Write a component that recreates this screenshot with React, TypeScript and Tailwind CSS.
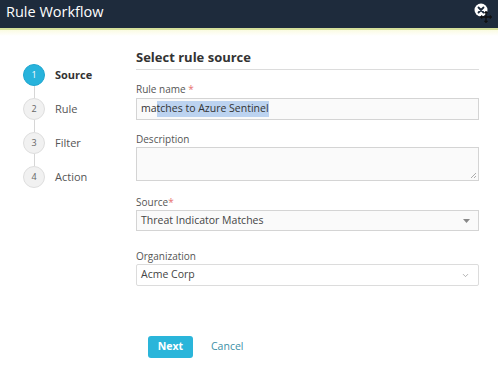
import { ChevronDown } from 'lucide-react'

const steps = ['Source', 'Rule', 'Filter', 'Action']

function CloseIcon() {
  return (
    <svg width="20" height="22" viewBox="0 0 20 22" className="absolute right-[5px] top-[2px]">
      <circle cx="8" cy="8" r="6.5" fill="#ffffff" />
      <path d="M5.5 5.5 L10.5 10.5 M10.5 5.5 L5.5 10.5" stroke="#1e2b3c" strokeWidth="1.8" strokeLinecap="round" />
      <g stroke="#111" strokeWidth="1.3" fill="#111">
        <path d="M13 10 V20 M8 15 H18" />
        <path d="M13 9 L11.3 11 H14.7 Z M13 21 L11.3 19 H14.7 Z M7 15 L9 13.3 V16.7 Z M19 15 L17 13.3 V16.7 Z" strokeWidth="0.6" />
      </g>
    </svg>
  )
}

function StepList() {
  return (
    <div className="w-[136px] shrink-0 pl-[23px] pt-[28px]">
      {steps.map((s, i) => (
        <div key={s} className="flex items-start">
          <div className="flex flex-col items-center">
            <div
              className={
                i === 0
                  ? 'w-[22px] h-[22px] rounded-full bg-[#27b3dc] border border-[#1fa6cf] text-white text-[9px] flex items-center justify-center'
                  : 'w-[22px] h-[22px] rounded-full bg-[#f1f1f1] border border-[#dedede] text-[#666] text-[9px] flex items-center justify-center'
              }
            >
              {i + 1}
            </div>
            {i < steps.length - 1 && <div className="w-px h-[12px] bg-[#d6d6d6]" />}
          </div>
          <div
            className={
              i === 0
                ? 'ml-[10px] h-[22px] flex items-center text-[11px] font-bold text-[#333]'
                : 'ml-[10px] h-[22px] flex items-center text-[11px] text-[#555]'
            }
          >
            {s}
          </div>
        </div>
      ))}
    </div>
  )
}

export default function App() {
  return (
    <div className="w-[498px] h-[371px] bg-white overflow-hidden" style={{ fontFamily: '"Open Sans", sans-serif' }}>
      <div className="relative h-[28px] bg-[#1e2b3c] flex items-center pl-[6px] pb-[3px]">
        <span className="text-white text-[14.5px] leading-none">Rule Workflow</span>
        <CloseIcon />
      </div>
      <div className="h-[2px] bg-[#d6e09c]" />
      <div className="h-[6px] bg-gradient-to-b from-[#fafbe2] to-white" />
      <div className="flex">
        <StepList />
        <div className="w-[343px] pt-[12px]">
          <div className="text-[13px] font-bold text-[#333] leading-[18px] pb-[3px] border-b border-[#dcdcdc]">
            Select rule source
          </div>

          <div className="mt-[12px] text-[10px] leading-[14px] text-[#555]">
            Rule name <span className="text-[#e8706f]">*</span>
          </div>
          <div className="mt-[2px] h-[22px] border border-[#d4d4d4] bg-[#fafafa] flex items-center px-[4px] text-[10.5px] text-[#333]">
            ma<span className="bg-[#bcd3f0]">tches to Azure Sentinel</span>
          </div>

          <div className="mt-[12px] text-[10px] leading-[14px] text-[#555]">Description</div>
          <div className="relative mt-[1px] h-[34px] border border-[#d4d4d4] bg-[#fafafa]">
            <svg width="7" height="7" viewBox="0 0 7 7" className="absolute right-[1px] bottom-[1px]">
              <path d="M6 1 L1 6 M6 4 L4 6" stroke="#999" strokeWidth="0.8" />
            </svg>
          </div>

          <div className="mt-[14px] text-[10px] leading-[14px] text-[#555]">
            Source<span className="text-[#e8706f]">*</span>
          </div>
          <div className="mt-[1px] h-[21px] border border-[#d4d4d4] bg-[#fafafa] flex items-center justify-between pl-[4px] pr-[8px] text-[10.5px] text-[#444]">
            <span>Threat Indicator Matches</span>
            <svg width="7" height="4" viewBox="0 0 7 4">
              <path d="M0 0 H7 L3.5 4 Z" fill="#888" />
            </svg>
          </div>

          <div className="mt-[18px] text-[10px] leading-[14px] text-[#555]">Organization</div>
          <div className="mt-[1px] h-[22px] border border-[#dcdcdc] rounded-[2px] bg-white flex items-center justify-between pl-[4px] pr-[8px] text-[10.5px] text-[#444]">
            <span>Acme Corp</span>
            <ChevronDown size={9} strokeWidth={2} color="#999" />
          </div>

          <div className="mt-[50px] pl-[12px] flex items-center">
            <button className="w-[45px] h-[22px] rounded-[3px] bg-[#2ab5da] text-white text-[10.5px] font-bold">
              Next
            </button>
            <span className="ml-[18px] text-[10.5px] text-[#3d8fa6]">Cancel</span>
          </div>
        </div>
      </div>
    </div>
  )
}
